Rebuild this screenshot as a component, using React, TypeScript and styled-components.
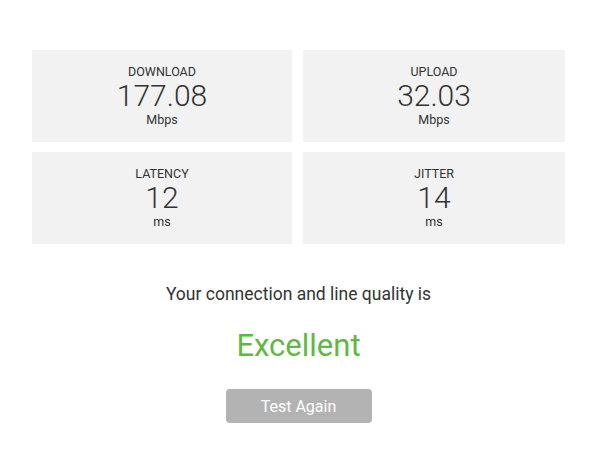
import styled, { createGlobalStyle } from "styled-components";

const GlobalStyle = createGlobalStyle`
  body {
    margin: 0;
    background: #ffffff;
    font-family: Roboto, "Liberation Sans", Arial, sans-serif;
    color: #333333;
  }
`;

const Page = styled.div`
  display: flex;
  flex-direction: column;
  align-items: center;
  padding: 50px 25px 0 32px;
`;

const Grid = styled.div`
  display: grid;
  grid-template-columns: 260px 262px;
  grid-auto-rows: 92px;
  column-gap: 11px;
  row-gap: 10px;
  align-self: flex-start;
`;

const Card = styled.div`
  background: #f2f2f2;
  display: flex;
  flex-direction: column;
  align-items: center;
  justify-content: center;
`;

const Label = styled.div`
  font-size: 12.5px;
  line-height: 14px;
  text-transform: uppercase;
`;

const Value = styled.div`
  font-size: 30px;
  font-weight: 300;
  line-height: 34px;
`;

const Unit = styled.div`
  font-size: 12.5px;
  line-height: 14px;
`;

const Summary = styled.div`
  margin-top: 40px;
  font-size: 17.5px;
  line-height: 20px;
`;

const Quality = styled.div`
  margin-top: 24px;
  font-size: 31px;
  line-height: 36px;
  color: #5fb843;
`;

const Button = styled.button`
  margin-top: 25px;
  width: 146px;
  height: 34px;
  border: none;
  border-radius: 4px;
  background: #b3b3b3;
  color: #ffffff;
  font-family: inherit;
  font-size: 16px;
  cursor: pointer;
`;

const stats = [
  { label: "Download", value: "177.08", unit: "Mbps" },
  { label: "Upload", value: "32.03", unit: "Mbps" },
  { label: "Latency", value: "12", unit: "ms" },
  { label: "Jitter", value: "14", unit: "ms" },
];

export default function App() {
  return (
    <>
      <GlobalStyle />
      <Page>
        <Grid>
          {stats.map((s) => (
            <Card key={s.label}>
              <Label>{s.label}</Label>
              <Value>{s.value}</Value>
              <Unit>{s.unit}</Unit>
            </Card>
          ))}
        </Grid>
        <Summary>Your connection and line quality is</Summary>
        <Quality>Excellent</Quality>
        <Button>Test Again</Button>
      </Page>
    </>
  );
}
